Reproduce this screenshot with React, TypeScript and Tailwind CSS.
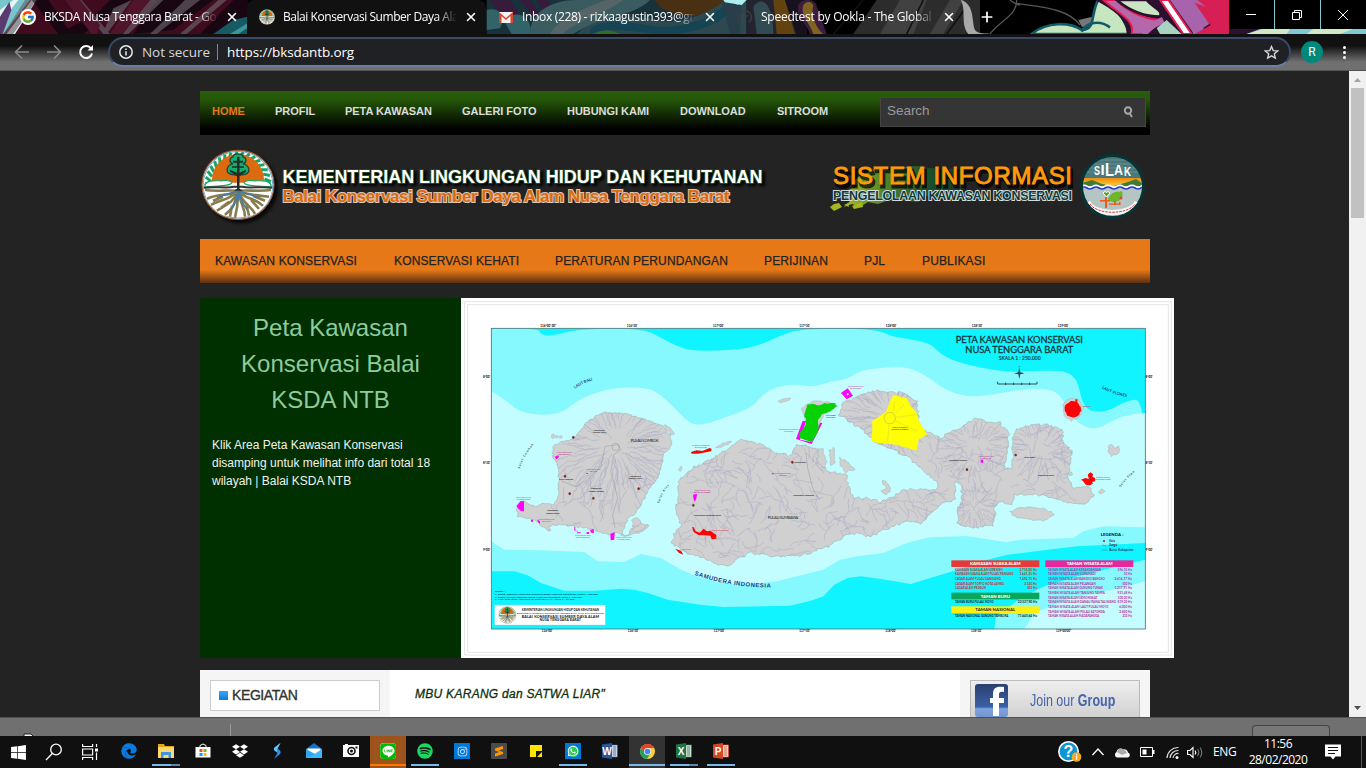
import React from "react";
import { FaDropbox, FaEdge, FaInstagram, FaLine, FaSpotify, FaWhatsapp, FaWindows } from "react-icons/fa";
import { FcGoogle } from "react-icons/fc";
import { X, Plus } from "lucide-react";

type Pt = [number, number];

/* ---------- helpers for coastlines and rivers ---------- */

function makeRandom(seed: number) {
  let s = seed;
  return () => {
    s = (s * 1664525 + 1013904223) % 4294967296;
    return s / 4294967296;
  };
}

function parse(src: string): Pt[] {
  return src.trim().split(/\s+/).map((p) => p.split(",").map(Number) as Pt);
}

function coast(src: string, seed: number, amp = 4): string {
  const pts = parse(src);
  const rnd = makeRandom(seed);
  let d = "";
  pts.forEach(([x, y], i) => {
    const [nx, ny] = pts[(i + 1) % pts.length];
    const n = Math.max(1, Math.round(Math.hypot(nx - x, ny - y) / 7));
    for (let k = 0; k < n; k++) {
      const t = k / n;
      const px = x + (nx - x) * t + (rnd() - 0.5) * amp * 2;
      const py = y + (ny - y) * t + (rnd() - 0.5) * amp * 2;
      d += `${d ? "L" : "M"}${px.toFixed(1)} ${py.toFixed(1)}`;
    }
  });
  return d + "Z";
}

function smooth(src: string): string {
  const p = parse(src);
  let d = `M${p[0][0]} ${p[0][1]}`;
  for (let i = 1; i < p.length - 1; i++) {
    const mx = (p[i][0] + p[i + 1][0]) / 2;
    const my = (p[i][1] + p[i + 1][1]) / 2;
    d += `Q${p[i][0]} ${p[i][1]} ${mx} ${my}`;
  }
  const l = p[p.length - 1];
  return d + `L${l[0]} ${l[1]}`;
}

function radial(cx: number, cy: number, r0: number, r1: number, n: number, seed: number): string {
  const rnd = makeRandom(seed);
  let d = "";
  for (let i = 0; i < n; i++) {
    let a = (i / n) * Math.PI * 2 + rnd() * 0.25;
    let r = r0 + rnd() * (r1 - r0) * 0.55;
    const end = r + (r1 - r) * (0.4 + rnd() * 0.6);
    d += `M${(cx + Math.cos(a) * r).toFixed(1)} ${(cy + Math.sin(a) * r).toFixed(1)}`;
    while (r < end) {
      r += 7;
      a += ((rnd() - 0.5) * 8) / r;
      d += `L${(cx + Math.cos(a) * r).toFixed(1)} ${(cy + Math.sin(a) * r).toFixed(1)}`;
    }
  }
  return d;
}

function streams(x0: number, y0: number, x1: number, y1: number, n: number, seed: number): string {
  const rnd = makeRandom(seed);
  let d = "";
  for (let i = 0; i < n; i++) {
    let x = x0 + rnd() * (x1 - x0);
    let y = y0 + rnd() * (y1 - y0);
    let a = rnd() * Math.PI * 2;
    d += `M${x.toFixed(1)} ${y.toFixed(1)}`;
    const len = 4 + Math.floor(rnd() * 7);
    for (let k = 0; k < len; k++) {
      a += (rnd() - 0.5) * 1.1;
      x += Math.cos(a) * 7;
      y += Math.sin(a) * 7;
      d += `L${x.toFixed(1)} ${y.toFixed(1)}`;
    }
  }
  return d;
}

/* ---------- map data ---------- */

const MID_TOP = smooth(
  "91,91 233,91 236,106 257,114 285,110 320,102 380,92 548,92 600,120 650,145 690,158 772,158 850,152 900,140 960,112 1020,92 1242,92 1290,115 1340,122 1407,136 1430,160 1460,180 1500,195 1570,212 1640,222 1700,220 1810,217 1845,240 1857,280 1863,310 1880,335 1910,343 1950,337 1990,310 2053,300 2053,735"
) +
  "L2053 735L1850 745L1760 755L1640 770L1560 790L1500 812L1400 842L1350 858L1260 843L1200 835L1160 840L1120 860L1087 895L1050 908L987 923L787 927L717 920L620 905L560 885L520 875L480 872L400 878L310 878L240 855L200 832L160 820L91 820Z";

const LIGHT =
  smooth(
    "91,280 140,310 175,342 250,353 310,342 350,305 430,275 480,269 560,270 600,290 640,330 690,381 737,378 800,355 870,330 900,295 940,268 1000,258 1060,268 1107,250 1157,245 1190,222 1240,210 1340,205 1407,240 1450,275 1520,298 1600,290 1700,270 1780,275 1810,310 1840,370 1900,398 1950,370 2000,350 2053,345"
  ) +
  "L2053 688L1927 685L1867 700L1837 720L1677 725L1637 733L1517 714L1407 718L1337 735L1267 765L1187 775L1137 785L1087 815L1007 835L947 850L860 860L787 855L720 840L660 815L600 780L540 768L490 792L410 790L370 762L240 757L130 755L91 730Z";

const LOMBOK = coast(
  "275,462 278,445 300,430 330,425 350,410 375,375 410,350 440,343 490,345 550,365 600,380 628,410 630,440 610,470 600,510 590,540 560,580 540,620 520,650 500,662 490,690 480,710 500,710 515,690 515,660 525,660 540,675 565,683 545,700 520,708 490,714 465,704 445,712 420,705 400,695 345,685 300,680 262,684 270,700 250,690 220,665 170,655 167,630 190,612 225,628 245,615 280,620 293,600 293,540 290,500 275,480",
  7, 3
);

const SUMBAWA = coast(
  "700,508 655,545 650,600 645,650 660,680 640,710 632,735 660,755 700,775 730,780 772,800 800,803 837,780 867,765 937,775 1017,772 1087,752 1157,713 1187,706 1227,717 1260,700 1287,690 1327,672 1377,675 1395,665 1407,650 1437,620 1462,612 1482,600 1482,550 1502,560 1502,610 1485,640 1492,680 1537,692 1597,682 1605,650 1600,628 1620,610 1650,620 1662,590 1707,588 1757,595 1807,610 1877,617 1897,590 1887,565 1837,570 1822,545 1827,500 1832,460 1807,435 1805,395 1757,380 1707,380 1667,395 1652,430 1657,480 1650,510 1630,512 1642,450 1642,400 1617,375 1567,368 1537,362 1507,385 1457,405 1442,422 1407,405 1377,390 1367,310 1327,285 1247,278 1187,295 1147,315 1132,350 1167,370 1207,400 1247,435 1307,460 1347,480 1387,520 1412,540 1434,560 1427,574 1327,575 1287,600 1257,612 1217,600 1177,600 1162,560 1157,530 1102,520 1072,490 1067,450 1007,440 987,475 937,460 877,430 842,425 797,455 747,485 720,500",
  19, 4
);

const ISLETS = [
  coast("1647,640 1677,627 1747,630 1782,650 1747,668 1690,663 1660,655", 3, 3),
  coast("1022,330 1057,308 1107,313 1130,325 1087,350 1072,400 1032,372", 4, 2),
  coast("1070,450 1085,452 1098,490 1085,510 1070,490", 5, 3),
  coast("1105,455 1118,450 1122,495 1108,500", 6, 3),
  coast("1137,480 1152,485 1180,515 1150,522 1140,505", 8, 3),
  coast("1265,550 1282,555 1290,580 1275,590 1262,580 1275,570", 9, 3),
  coast("952,310 968,302 990,300 985,307 960,314", 10, 1),
  coast("765,450 785,435 812,430 800,440 780,447", 12, 2),
  coast("611,380 628,390 641,408 632,410 615,395", 13, 1),
  coast("653,515 660,505 664,512 658,521", 14, 1),
  coast("1942,445 1952,438 1962,452 1974,445 1977,462 1950,474 1942,465", 15, 2),
  coast("1912,582 1922,572 1932,580 1920,589", 16, 1),
  coast("1823,525 1832,522 1834,531 1825,534", 17, 1),
  coast("1806,320 1825,302 1850,302 1868,330 1855,358 1830,369 1808,352", 18, 2),
];

const GRATICULE: [number, number, string][] = [
  [262, 88, "116°00' 00\""], [513, 88, "116°30'"], [772, 88, "117°00'"], [1031, 88, "117°30'"], [1290, 88, "118°00'"], [1548, 88, "118°30'"], [1806, 88, "119°00'"],
  [258, 1003, "116°00'"], [516, 1003, "116°30'"], [774, 1003, "117°00'"], [1031, 1003, "117°30'"], [1289, 1003, "118°00'"], [1546, 1003, "118°30'"], [1808, 1003, "119°00'00\""],
  [77, 239, "8°00'"], [77, 498, "8°30'"], [77, 758, "9°00'"],
  [2064, 239, "8°00'"], [2064, 498, "8°30'"], [2064, 758, "9°00'"],
];

const SMALL: [number, number, number, string, string][] = [
  [415, 399, 32, "Kabupaten", "#222"], [415, 406, 40, "Lombok Utara", "#222"],
  [523, 536, 32, "Kabupaten", "#222"], [523, 543, 40, "Lombok Timur", "#222"],
  [406, 574, 32, "Kabupaten", "#222"], [406, 581, 46, "Lombok Tengah", "#222"],
  [275, 640, 32, "Kabupaten", "#222"], [275, 647, 40, "Lombok Barat", "#222"],
  [315, 546, 42, "Kota Mataram", "#222"],
  [311, 466, 44, "TAMAN WISATA ALAM", "#c0268f"], [311, 472, 36, "KERANDANGAN", "#c0268f"],
  [397, 516, 44, "TAMAN WISATA ALAM", "#c0268f"], [397, 522, 24, "SURANADI", "#c0268f"],
  [188, 600, 44, "TAMAN WISATA ALAM", "#c0268f"], [188, 606, 40, "BANGKO BANGKO", "#c0268f"],
  [257, 666, 46, "TAMAN WISATA ALAM", "#c0268f"], [257, 672, 26, "PELANGAN", "#c0268f"],
  [366, 714, 46, "TAMAN WISATA ALAM", "#c0268f"], [366, 720, 40, "GUNUNG TUNAK", "#c0268f"],
  [488, 719, 46, "TAMAN WISATA ALAM", "#c0268f"], [488, 725, 38, "TANJUNG TAMPA", "#c0268f"],
  [720, 445, 52, "CAGAR ALAM PULAU", "#d22"], [720, 451, 36, "PANJANG", "#d22"],
  [724, 579, 46, "TAMAN WISATA ALAM", "#c0268f"], [724, 585, 50, "DANAU LEBO", "#c0268f"],
  [778, 698, 52, "CAGAR ALAM PEDAUH", "#d22"], [677, 757, 26, "CAGAR ALAM", "#d22"],
  [740, 653, 80, "Kabupaten Sumbawa Barat", "#222"], [1028, 594, 62, "Kabupaten Sumbawa", "#222"],
  [1018, 495, 36, "Sumbawa Besar", "#222"], [966, 528, 46, "TAMAN WISATA ALAM", "#c0268f"], [966, 534, 26, "SEMONGKAT", "#c0268f"],
  [983, 397, 58, "TAMAN WISATA ALAM LAUT", "#c0268f"], [983, 403, 26, "PULAU MOYO", "#c0268f"],
  [1184, 267, 46, "TAMAN WISATA ALAM", "#c0268f"], [1184, 273, 34, "PULAU SATONDA", "#c0268f"],
  [1109, 353, 30, "TAMAN BURU", "#222"], [1109, 359, 26, "PULAU MOYO", "#222"],
  [1317, 389, 46, "TAMAN NASIONAL", "#222"], [1317, 395, 52, "GUNUNG TAMBORA", "#222"],
  [1491, 490, 54, "Kabupaten Dompu", "#222"], [1706, 481, 32, "Kota Bima", "#222"], [1755, 534, 48, "Kabupaten Bima", "#222"],
  [1576, 477, 46, "TAMAN WISATA ALAM", "#c0268f"], [1576, 483, 30, "MADAPANGGA", "#c0268f"],
  [1877, 326, 24, "PULAU", "#d22"], [1926, 541, 40, "CAGAR ALAM", "#d22"], [1926, 547, 46, "TOFFO KOTA LAMBU", "#d22"],
];

const LEFT_ROWS: [number, string, string, string][] = [
  [818, "KAWASAN SUAKA ALAM JEREWEH", "3.718,80 Ha", "#cf2b2b"],
  [831, "KAWASAN SUAKA ALAM PULAU PANJANG", "1.641,25 Ha", "#cf2b2b"],
  [845, "CAGAR ALAM PULAU SANGIANG", "7.492,75 Ha", "#cf2b2b"],
  [861, "CAGAR ALAM TOFFO KOTA LAMBU", "3.340 Ha", "#cf2b2b"],
  [874, "CAGAR ALAM PEDAUH", "825 Ha", "#cf2b2b"],
  [916, "TAMAN BURU PULAU MOYO", "22.537,90 Ha", "#123"],
  [957, "TAMAN NASIONAL GUNUNG TAMBORA", "71.645,64 Ha", "#123"],
];

const RIGHT_ROWS: [string, string][] = [
  ["TAMAN WISATA ALAM KERANDANGAN", "396,10 Ha"], ["TAMAN WISATA ALAM SURANADI", "52 Ha"],
  ["TAMAN WISATA ALAM BANGKO BANGKO", "2.616,17 Ha"], ["TAMAN WISATA ALAM PELANGAN", "500 Ha"],
  ["TAMAN WISATA ALAM GUNUNG TUNAK", "1.217,91 Ha"], ["TAMAN WISATA ALAM TANJUNG TAMPA", "931,48 Ha"],
  ["TAMAN WISATA ALAM SEMONGKAT", "100,20 Ha"], ["TAMAN WISATA ALAM DANAU RAWA TALIWANG", "819,20 Ha"],
  ["TAMAN WISATA ALAM LAUT PULAU MOYO", "6.000 Ha"], ["TAMAN WISATA ALAM PULAU SATONDA", "2.600 Ha"],
  ["TAMAN WISATA ALAM MADAPANGGA", "232 Ha"],
];

const CITIES: Pt[] = [[337, 418], [312, 535], [326, 587], [533, 572], [397, 601], [697, 622], [994, 493], [1518, 515], [1664, 471]];

function RegionMap() {
  return (
    <svg viewBox="0 0 2139 1080" className="block h-[360px] w-[713px] shrink-0 bg-white font-['Lato',sans-serif]">
      <rect x="11" y="11" width="2120" height="1060" fill="none" stroke="#e4e4e4" strokeWidth="3" />
      <rect x="20" y="20" width="2102" height="1043" fill="none" stroke="#e4e4e4" strokeWidth="3" />
      <defs>
        <clipPath id="frame"><rect x="91" y="91" width="1962" height="902" /></clipPath>
        <clipPath id="land"><path d={LOMBOK} /><path d={SUMBAWA} /></clipPath>
        <path id="arcSea" d="M700 830Q815 872 950 868" />
        <path id="arcBali" d="M342 272Q370 252 397 247" />
        <path id="arcFlores" d="M1922 271Q1960 292 2004 298" />
        <path id="arcLombok" d="M176 512Q190 470 220 438" />
        <path id="arcAlas" d="M595 616Q600 590 626 560" />
        <path id="arcSape" d="M1979 568Q1996 540 2026 518" />
      </defs>
      <g clipPath="url(#frame)">
        <rect x="91" y="91" width="1962" height="902" fill="#10f4ff" />
        <path d={MID_TOP} fill="#86f9ff" />
        <path d="M1600 993L1605 955L1680 900L1750 865L1850 835L1950 810L2053 785V993Z" fill="#86f9ff" />
        <path d="M1690 993L1720 945L1830 900L1980 870L2053 850V993Z" fill="#c4fdff" />
        <path d={LIGHT} fill="#c4fdff" />
        <path d={LOMBOK} fill="#d0d0d0" stroke="#9aa" strokeWidth="1.5" />
        <path d={SUMBAWA} fill="#d0d0d0" stroke="#9aa" strokeWidth="1.5" />
        {ISLETS.map((d, i) => <path key={i} d={d} fill="#d0d0d0" stroke="#9aa" strokeWidth="1.2" />)}
        <g fill="#d0d0d0" stroke="#9aa" strokeWidth="1">
          <ellipse cx="276" cy="415" rx="5" ry="7" /><circle cx="287" cy="416" r="4" /><ellipse cx="299" cy="417" rx="5" ry="4" />
          <circle cx="603" cy="487" r="4" />
        </g>
        <g clipPath="url(#land)" fill="none" stroke="#a3a3c6" strokeWidth="1.5" opacity=".85">
          <path d={radial(465, 445, 24, 200, 90, 31)} />
          <path d={radial(1285, 360, 24, 150, 80, 32)} />
          <path d={radial(1540, 450, 20, 110, 44, 33)} />
          <path d={radial(1740, 450, 20, 110, 44, 34)} />
          <path d={radial(1538, 625, 14, 80, 34, 38)} />
          <path d={streams(280, 520, 600, 700, 46, 35)} />
          <path d={streams(650, 430, 1110, 790, 190, 36)} />
          <path d={streams(1100, 590, 1480, 710, 70, 37)} />
          <path d={streams(1420, 400, 1880, 620, 110, 39)} />
        </g>
        <g fill="none" stroke="#8b8b93" strokeWidth="1.2">
          <path d="M300 548L345 566L380 545L420 505L432 445L470 440L480 455L458 470L450 520L470 600L455 650L462 690" />
          <path d="M1035 465L1040 510L1055 570L1075 605" /><circle cx="464" cy="447" r="11" />
        </g>
        <path fill="#ffff05" d={coast("1297,292 1337,300 1352,330 1367,345 1372,365 1399,410 1372,425 1367,458 1307,440 1257,435 1232,430 1234,370 1277,340 1287,310", 41, 1)} />
        <circle cx="1286" cy="360" r="17" fill="none" stroke="#c2b84a" strokeWidth="2" />
        <path d="M1300 310L1296 343M1330 320L1300 348M1366 350L1303 358M1370 400L1302 368M1280 430L1284 378" stroke="#d6cf50" fill="none" strokeWidth="1.5" />
        <path fill="#f0f" d="M1025 368L1035 370L1017 425L1052 432L1077 375L1084 375L1052 438L1005 423Z" />
        <path fill="#06d206" d={coast("1039,320 1055,318 1075,322 1090,316 1122,315 1128,325 1107,340 1082,350 1072,365 1072,400 1052,433 1017,420 1015,405 1032,385 1036,362 1029,355", 42, 1)} />
        <g fill="#f0f">
          <path d="M1140 285L1160 271L1176 293L1157 304Z" /><circle cx="1160" cy="289" r="3" fill="#fff" />
          <path d="M166 625L178 610L189 608L189 640L178 638Z" /><path d="M281 476L292 472L294 478L286 484Z" />
          <path d="M448 708L461 702L460 725L449 727Z" /><path d="M387 696L398 693L399 705L390 704Z" />
          <path d="M340 686h3v14h5v6h11v-3h-10v-5h-9zM377 702h7v6h-7zM210 665h6v6h-6zM228 664l9 6v8l-5-4z" />
          <path d="M696 590L708 587L706 603L701 612L697 600Z" /><path d="M1559 485h7v9h-7z" /><path d="M932 526h8v3h-8zM376 525h5v3h-5z" />
        </g>
        <g fill="#fb0404">
          <path d="M690 462L707 457L724 459L746 450L752 453L750 460L728 464L710 467L692 467Z" />
          <path d="M693 687L698 688L704 700L716 704L728 692L738 700L748 698L766 711L766 722L752 724L748 713L730 712L712 711L698 702Z" />
          <path d="M643 752L660 758L667 770L654 765Z" />
          <path d={coast("1814,322 1828,311 1846,311 1860,325 1862,340 1850,354 1836,359 1818,352 1811,338", 43, 2)} /><path d="M1843 304h6v12h-6z" />
          <path d="M1860 545L1873 540L1884 543L1880 530L1888 523L1896 528L1894 536L1902 540V550L1893 552L1896 557L1886 562L1874 560L1866 549Z" />
        </g>
        {CITIES.map(([x, y], i) => <circle key={i} cx={x} cy={y} r="3.2" fill="#a01818" stroke="#400" strokeWidth="1" />)}
        <g fill="#1d3f86" fontWeight="700">
          <text fontSize="18" fontFamily="Liberation Sans"><textPath href="#arcSea" textLength="234">SAMUDERA INDONESIA</textPath></text>
          <text fontSize="12"><textPath href="#arcBali" textLength="58">LAUT BALI</textPath></text>
          <text fontSize="12"><textPath href="#arcFlores" textLength="80">LAUT FLORES</textPath></text>
          <g fill="#345" fontSize="9">
            <text><textPath href="#arcLombok" textLength="84">Selat Lombok</textPath></text>
            <text><textPath href="#arcAlas" textLength="62">Selat Alas</textPath></text>
            <text><textPath href="#arcSape" textLength="62">Selat Sape</textPath></text>
          </g>
        </g>
        <g textAnchor="middle" fill="#222">
          <text x="551" y="431" fontSize="12" textLength="84">PULAU LOMBOK</text>
          <text x="966" y="663" fontSize="12" textLength="92">PULAU SUMBAWA</text>
        </g>
        <g textAnchor="middle" fontSize="6.5" fontWeight="700">
          {SMALL.map(([x, y, w, t, c], i) => <text key={i} x={x} y={y} fill={c} textLength={w} lengthAdjust="spacingAndGlyphs">{t}</text>)}
        </g>
        <g fill="#10323a" textAnchor="middle">
          <text x="1675" y="136" fontSize="28" textLength="381" stroke="#10323a" strokeWidth=".8">PETA KAWASAN KONSERVASI</text>
          <text x="1675" y="166" fontSize="28" textLength="324" stroke="#10323a" strokeWidth=".8">NUSA TENGGARA BARAT</text>
          <text x="1676" y="186" fontSize="15" textLength="126" stroke="#10323a" strokeWidth=".4">SKALA 1 : 250.000</text>
          <text x="1675" y="206" fontSize="7">U</text>
        </g>
        <path d="M1675 208L1678 223L1691 226L1678 229L1675 244L1672 229L1659 226L1672 223Z" fill="#284a50" />
        <path d="M1610 251V258H1728V251M1634 254V261M1658 254V261M1682 254V261M1706 254V261" fill="none" stroke="#233" strokeWidth="2.5" />
        <g fill="#123">
          <text x="1919" y="713" fontSize="13" fontWeight="900" textLength="68">LEGENDA :</text>
          <circle cx="1929" cy="729" r="3" fill="#a11" />
          <path d="M1924 740l6 3 5-1M1921 756h18" stroke="#345" fill="none" />
          <text x="1945" y="732" fontSize="8" fontWeight="700">Kota</text>
          <text x="1945" y="745" fontSize="8" fontWeight="700">Sungai</text>
          <text x="1945" y="759" fontSize="8" fontWeight="700" textLength="72">Batas Kabupaten</text>
        </g>
        <g fontSize="13" fontWeight="900" fill="#fff" textAnchor="middle">
          <rect x="1471" y="787" width="264" height="20" fill="#e8393a" /><text x="1603" y="802" textLength="152">KAWASAN SUAKA ALAM</text>
          <rect x="1471" y="884" width="264" height="20" fill="#0ba55a" /><text x="1603" y="899" textLength="88">TAMAN BURU</text>
          <rect x="1471" y="925" width="264" height="20" fill="#fdf010" /><text x="1603" y="940" textLength="120" fill="#333">TAMAN NASIONAL</text>
          <rect x="1753" y="787" width="264" height="20" fill="#e6299a" /><text x="1886" y="802" textLength="138">TAMAN WISATA ALAM</text>
        </g>
        <g fontSize="8" fontWeight="700">
          {LEFT_ROWS.map(([y, a, b, c]) => (
            <g key={a} fill={c}><text x="1482" y={y} textLength={a.length * 5.5} lengthAdjust="spacingAndGlyphs">{a}</text><text x="1728" y={y} textAnchor="end" textLength={b.length * 4.8} lengthAdjust="spacingAndGlyphs">{b}</text></g>
          ))}
          {RIGHT_ROWS.map(([a, b], i) => (
            <g key={a} fill="#b8329c"><text x="1761" y={818 + i * 14} textLength={a.length * 5.5} lengthAdjust="spacingAndGlyphs">{a}</text><text x="2013" y={818 + i * 14} textAnchor="end" textLength={b.length * 4.8} lengthAdjust="spacingAndGlyphs">{b}</text></g>
          ))}
        </g>
        <g fill="#073b4a" fontSize="7.5" fontWeight="700">
          <text x="102" y="883">Sumber :</text>
          <text x="102" y="891" textLength="308">1. Digital Kawasan Konservasi Indonesia Badan Planologi Kehutanan, Skala 1 : 250.000</text>
          <text x="102" y="899" textLength="260">2. Digital Wilayah Indonesia Badan Planologi Kehutanan, Skala 1 : 250.000</text>
          <text x="102" y="907" textLength="238">3. Peta Rupa Bumi Indonesia BAKOSURTANAL, Skala 1 : 25.000</text>
        </g>
        <rect x="101" y="921" width="332" height="60" fill="#fff" stroke="#9cc" />
        <svg x="112" y="924" width="54" height="54" viewBox="0 0 74 74"><SealArt /></svg>
        <g fill="#222" fontWeight="700" textAnchor="middle">
          <text x="298" y="940" fontSize="9" textLength="232">KEMENTERIAN LINGKUNGAN HIDUP DAN KEHUTANAN</text>
          <text x="298" y="948" fontSize="6.5" textLength="262">DIREKTORAT JENDERAL KONSERVASI SUMBER DAYA ALAM DAN EKOSISTEM</text>
          <text x="298" y="959" fontSize="11" fontWeight="900" textLength="232">BALAI KONSERVASI SUMBER DAYA ALAM</text>
          <text x="298" y="970" fontSize="9.5" fontWeight="900" textLength="124">NUSA TENGGARA BARAT</text>
        </g>
      </g>
      <rect x="91" y="91" width="1962" height="902" fill="none" stroke="#4a7478" strokeWidth="2.5" />
      <g fontSize="9" fontWeight="900" fill="#222" textAnchor="middle">
        {GRATICULE.map(([x, y, t], i) => <text key={i} x={x} y={y}>{t}</text>)}
      </g>
    </svg>
  );
}

/* ---------- logos ---------- */

function SealArt() {
  const leaves = Array.from({ length: 18 }, (_, i) => Math.PI - 0.1 + (i / 17) * (Math.PI + 0.1));
  return (
    <g>
      <ellipse cx="37" cy="37" rx="36" ry="34.5" fill="#fff" stroke="#9a5a35" strokeWidth="1.2" />
      <ellipse cx="37" cy="37" rx="34.800" ry="33.300" fill="none" stroke="#4d8fb8" strokeWidth=".8" />
      {leaves.map((a, i) => (
        <path key={i} d={`M${37 + Math.cos(a) * 27} ${36 + Math.sin(a) * 26}L${37 + Math.cos(a + 0.12) * 33} ${36 + Math.sin(a + 0.12) * 32}`} stroke="#12a566" strokeWidth="3" />
      ))}
      <path d="M11 35C10 19 22 6.500 37 6.500S64 19 63 35L50 35H24Z" fill="#dc6a0e" />
      <path d="M4 37C6 32 14 33 20 33C28 32 33 34 30 36C26 39 12 38 4 39ZM70 37C68 32 60 33 54 33C46 32 41 34 44 36C48 39 62 38 70 39Z" fill="#fff" stroke="#12a566" strokeWidth="1.200" />
      <path d="M3 41C12 39 22 41 31 41L43 41C52 40 62 39 71 41C70 48 68 53 64 58L58 64C50 71 24 71 16 64L10 58C6 53 4 48 3 41Z" fill="#fff" />
      <path d="M36 43C26 42 14 44 4 42M36 44C28 48 16 46 6 51M36 44C28 52 20 52 10 57M36 45C32 56 22 58 16 63M36 46C34 58 30 62 24 67M37 46C37 56 36 62 34 70M38 46C40 58 44 60 44 69M38 45C42 56 50 58 54 66M38 44C46 52 54 50 62 58M38 44C46 46 56 48 68 49M38 43C48 42 60 44 70 42M28 54L20 60M31 58L29 69M45 55L48 68M50 52L58 61M22 49L12 53M52 48L64 53" fill="none" stroke="#867c4d" strokeWidth="2.600" />
      <path d="M3 40C14 38 24 41 33 39L41 39C50 41 60 38 71 40" fill="none" stroke="#333" strokeWidth="2" />
      <path d="M36 43C30 46 24 46 16 50M37 43C36 50 34 56 30 62M38 43C44 46 50 46 57 50M38 43C39 50 42 56 46 62M37 42V54" fill="none" stroke="#3c7db0" strokeWidth="1.500" />
      <path d="M32 9C31 5 43 5 42 9C46 10 46 15 42 16C49 17 51 27 41 27H33C23 27 25 17 32 16C28 15 28 10 32 9Z" fill="#12b070" stroke="#234236" strokeWidth="1.300" />
      <path d="M36 9H38.500V41L42 43H33L36 41ZM29 22L36 25V28.500L29 24ZM45 22L38.500 25V28.500L45 24ZM32 13H42V15H32ZM31 18.500H43V20H31Z" fill="#252b25" />
    </g>
  );
}

function MinistryLogo() {
  return (
    <svg viewBox="0 0 575 80" className="h-[80px] w-[575px] shrink-0 font-['Liberation_Sans',Arial,sans-serif] font-bold">
      <defs><filter id="soft"><feGaussianBlur stdDeviation="1.6" /></filter></defs>
      <ellipse cx="41" cy="39" rx="37" ry="35.500" fill="#000" opacity=".75" filter="url(#soft)" />
      <g transform="translate(1 -1.200)"><SealArt /></g>
      <text x="85" y="36" fontSize="18" textLength="480" fill="#000" filter="url(#soft)" stroke="#000" strokeWidth="2">KEMENTERIAN LINGKUNGAN HIDUP DAN KEHUTANAN</text>
      <text x="82.500" y="33.500" fontSize="18" textLength="480" fill="#fff" stroke="#1d4a22" strokeWidth="1.800" paintOrder="stroke">KEMENTERIAN LINGKUNGAN HIDUP DAN KEHUTANAN</text>
      <text x="82.500" y="53" fontSize="17" textLength="447" fill="#dc6a0e" stroke="#dcc6b4" strokeWidth="2" paintOrder="stroke">Balai Konservasi Sumber Daya Alam Nusa Tenggara Barat</text>
    </svg>
  );
}

function SilakLogo() {
  return (
    <svg viewBox="0 0 320 80" className="h-[80px] w-[320px] shrink-0 font-['Liberation_Sans',Arial,sans-serif]">
      <defs>
        <linearGradient id="brush" x1="0" x2="1"><stop offset="0" stopColor="#a8bd18" /><stop offset=".35" stopColor="#4c7f2e" /><stop offset=".7" stopColor="#154b2c" /><stop offset="1" stopColor="#20342a" /></linearGradient>
        <linearGradient id="sun" x1="0" x2="0" y1="0" y2="1"><stop offset="0" stopColor="#f08b10" /><stop offset="1" stopColor="#f9d33c" /></linearGradient>
        <clipPath id="disc"><circle cx="282.500" cy="36.500" r="29.500" /></clipPath>
      </defs>
      <path d="M28 27L46 18L60 20L72 17L88 16L98 18L118 19L138 18L143 21L132 25L141 29L130 33L136 38L124 42L116 48L96 46L88 52L62 49L48 54L38 52L30 57L22 54L14 57L20 51L12 50L18 47L24 43L18 40L28 36L22 33Z" fill="url(#brush)" />
      <path d="M0 57L4 54L9 53L12 57L4 61ZM22 56L32 52L33 57L24 59ZM14 55L18 53L19 57Z" fill="#a5b520" />
      <g fontWeight="400">
        <text x="5" y="36.500" fontSize="24" textLength="239" fill="#000" stroke="#000" strokeWidth="3" opacity=".7">SISTEM INFORMASI</text>
        <text x="3" y="34" fontSize="24" textLength="239" fill="#ff9a08" stroke="#ff9a08" strokeWidth=".9">SISTEM INFORMASI</text>
      </g>
      <text x="3" y="49.500" fontSize="12.500" fontWeight="700" textLength="239" fill="#12393b" stroke="#d3dedb" strokeWidth="1.800" paintOrder="stroke">PENGELOLAAN KAWASAN KONSERVASI</text>
      <circle cx="282.500" cy="36.500" r="32.500" fill="#063436" />
      <g clipPath="url(#disc)">
        <rect x="250" y="5" width="65" height="25" fill="#49777a" />
        <path d="M253 14H313M253 18H313M253 22H313M255 10H311" stroke="#769a9a" strokeWidth=".7" />
        <rect x="250" y="28" width="65" height="9" fill="url(#sun)" />
        <path d="M252 33L262 30L272 34L282 36H252ZM284 36L298 32L306 29L313 34V37H284Z" fill="#3f7d34" />
        <rect x="250" y="36" width="65" height="32" fill="#b5c5c3" />
        <path d="M251 37Q254 35 257 37T263 37T269 37T275 37T281 37T287 37T293 37T299 37T305 37T311 37T317 37" fill="none" stroke="#fff" strokeWidth="3" />
        <path d="M251 38Q254 36 257 38T263 38T269 38T275 38T281 38T287 38T293 38T299 38T305 38T311 38T317 38" fill="none" stroke="#2436c4" strokeWidth="1.600" />
        <path d="M258 52C264 66 301 66 307 52" fill="none" stroke="#f5f5f5" strokeWidth="5" />
        <path d="M260 54C267 65 298 65 305 54" fill="none" stroke="#d53a2d" strokeWidth="1" strokeDasharray="2.500 1" />
        <path d="M278 49C282 39 290 43 292 41C295 50 286 54 280 51Z" fill="#6db52a" />
        <path d="M273 43l2-1.500 1.500 1 1.500-1 2 1.500-3.500 4z" fill="#53a528" stroke="#fff" />
        <path d="M275 47h2v11H275zM270 50h10v1.500H270zM284 51h2v4h-2zM289 52h1.500v3h-1.500zM279 53.500h11v1.200H279z" fill="#ee5a18" />
        <circle cx="291" cy="48" r="1.500" fill="#e44" />
      </g>
      <g fill="#fff" fontWeight="700" fontFamily="Liberation Sans">
        <text x="264" y="25" fontSize="12" textLength="6" lengthAdjust="spacingAndGlyphs">S</text>
        <text x="270.500" y="25" fontSize="15" textLength="4">I</text>
        <text x="275" y="26" fontSize="18" textLength="9" lengthAdjust="spacingAndGlyphs">L</text>
        <text x="284" y="25" fontSize="14" textLength="9" lengthAdjust="spacingAndGlyphs">A</text>
        <text x="294" y="26" fontSize="12" textLength="7" lengthAdjust="spacingAndGlyphs">K</text>
      </g>
    </svg>
  );
}

/* ---------- browser chrome ---------- */

function ThemeArt() {
  return (
    <svg viewBox="0 0 4098 102" preserveAspectRatio="none" className="absolute inset-0 h-[34px] w-[1366px]">
      <rect width="4098" height="102" fill="#000" />
      <path d="M0 0H742V102H0Z" fill="#400c1d" />
      <path d="M0 0H90L10 102H0Z" fill="#78c6cc" /><path d="M0 30L40 0H55L0 70ZM20 102L95 0H110L45 102Z" fill="#e9f3f2" /><path d="M0 50L28 5L34 30L8 102H0Z" fill="#5b3a72" />
      <path d="M95 0H145L215 102H175ZM330 0H395L250 102H175L290 40ZM475 0H640L520 90L400 102L440 40ZM700 0H742V60L640 102H600Z" fill="#180712" />
      <path d="M75 0H110L40 102H10ZM225 0L245 0L330 102H310ZM340 25L395 0L320 102H308ZM450 0H490L385 102H368ZM555 0H600L470 102H450ZM655 0L680 0L560 102H540Z" fill="#67636b" opacity=".65" />
      <path d="M195 0H240L300 75L290 102H275ZM400 0H450L365 102H330Z" fill="#50142b" />
      <path d="M640 102L700 60L742 50V102Z" fill="#165a63" /><path d="M690 102L742 70V84L715 102Z" fill="#3c9699" />
      <path d="M1460 0H2225V102H1460Z" fill="#19313a" />
      <path d="M1470 0H1530L1600 102H1545ZM1560 0H1590L1650 80L1640 102ZM1610 0H1640L1690 60L1660 90Z" fill="#371b3b" />
      <path d="M1460 30C1500 20 1520 50 1500 85L1460 90ZM1510 60C1560 20 1600 60 1590 102H1535Z" fill="#316368" />
      <path d="M1590 102C1590 40 1650 0 1730 0H1950C1900 50 1790 55 1720 102Z" fill="#3a5b5f" />
      <path d="M1650 102C1670 60 1750 25 1820 0H1870C1800 50 1720 65 1690 102Z" fill="#61696b" opacity=".7" />
      <path d="M1965 0H2180C2140 55 2030 60 1980 20Z" fill="#4a3013" />
      <path d="M1730 102C1800 40 1900 45 1970 60C2040 80 2130 35 2180 0H2240V102Z" fill="#2d484e" />
      <path d="M1770 85C1850 40 1930 85 2000 80C2100 75 2160 35 2190 0L2215 0C2190 60 2100 102 2000 102C1920 102 1850 75 1770 102Z" fill="#154454" />
      <path d="M1780 102Q1820 80 1860 102Z" fill="#356a2f" />
      <path d="M2170 0H2240L2220 20L2200 45Z" fill="#aeeef1" /><path d="M2165 5L2225 15L2218 102H2190Z" fill="#283e4b" /><path d="M2185 0H2232L2212 14Z" fill="#aeeef1" />
      <path d="M2240 0H2420V102H2240Z" fill="#23242f" /><path d="M2260 20C2290 -20 2320 20 2320 102H2270Z" fill="#324a51" /><path d="M2320 0H2355L2385 102H2330Z" fill="#62420e" />
      <path d="M2355 0H2420V102H2390Z" fill="#17101d" /><path d="M2395 15C2405 -5 2445 -5 2450 18L2480 102H2430C2420 70 2385 50 2395 15Z" fill="#3c1c3f" /><path d="M2410 15C2420 0 2440 5 2440 20C2430 45 2450 85 2470 102H2440C2430 70 2400 45 2410 15Z" fill="#806321" />
      <path d="M2560 102L2630 0H2940V102Z" fill="#2c2c2c" /><path d="M2700 0H2780L2740 102H2640ZM2850 0H2890L2830 102H2790Z" fill="#414141" />
      <path d="M2500 102L2590 0M2720 102L2770 0M2840 102L2900 20" stroke="#111" strokeWidth="5" fill="none" />
      <path d="M2882 0C2925 10 2915 70 2925 90C2935 105 2960 98 2972 102H2905C2880 70 2900 30 2882 0Z" fill="#a9a9a9" />
      <path d="M2970 102C3000 60 3050 50 3050 0M3050 10C3100 20 3200 20 3240 75M3060 15C3040 10 3030 0 3030 0" stroke="#555" strokeWidth="4" fill="none" />
      <path d="M3235 60L3300 45V80H3245Z" fill="#777" />
      <path d="M3095 102C3140 65 3210 65 3245 90C3290 90 3270 40 3295 0H3350C3350 50 3390 75 3385 102Z" fill="#c6e6c0" stroke="#125a67" strokeWidth="8" />
      <path d="M3245 95C3260 65 3300 60 3330 82" stroke="#125a67" strokeWidth="8" fill="none" />
      <path d="M3285 0H3570L3700 102H3380C3380 55 3340 30 3285 0Z" fill="#2c1030" />
      <path d="M3310 0C3360 45 3405 60 3395 102H3440L3480 60C3420 55 3370 25 3350 0Z" fill="#b467aa" stroke="#e31d52" strokeWidth="6" />
      <path d="M3350 0H3440C3460 25 3490 30 3480 50C3420 50 3380 25 3350 0Z" fill="#cae7c3" stroke="#2c1030" strokeWidth="8" />
      <path d="M3430 102C3450 75 3470 70 3490 60" stroke="#b467aa" strokeWidth="20" fill="none" /><path d="M3470 85L3500 60L3545 102H3480Z" fill="#a9d2c1" />
      <path d="M3545 0H3610V102H3580Z" fill="#a863ad" /><path d="M3480 0H3505L3575 102H3550Z" fill="#fff" stroke="#e31d52" strokeWidth="6" />
      <path d="M3510 0H3610V102H3582Z" fill="#a863ad" /><path d="M3560 0H3687V102H3585L3632 75Z" fill="#d81f55" /><path d="M3520 0L3600 90L3628 72L3578 0Z" fill="#a863ad" /><path d="M3560 0L3618 20L3592 0Z" fill="#a863ad" />
      <path d="M3687 0H4098V102H3687Z" fill="#7fcad0" /><path d="M3687 87H3780L3740 102H3687Z" fill="#2c1030" /><path d="M3740 102L3790 87H3870L3860 102ZM3940 87H4060L4020 102H3920Z" fill="#cfe8c6" />
    </svg>
  );
}

const TABS = [
  { title: "BKSDA Nusa Tenggara Barat - Goo", kind: "google", bg: "bg-transparent", track: "tracking-[-0.4px]" },
  { title: "Balai Konservasi Sumber Daya Alam", kind: "seal", bg: "bg-[#111111]", track: "tracking-[-0.45px]" },
  { title: "Inbox (228) - rizkaagustin393@gmail", kind: "mail", bg: "bg-transparent", track: "tracking-[-0.33px]" },
  { title: "Speedtest by Ookla - The Global B", kind: "speed", bg: "bg-transparent", track: "tracking-[-0.24px]" },
];

function TabIcon({ kind }: { kind: string }) {
  if (kind === "google") return <span className="flex size-4 items-center justify-center rounded-full bg-white"><FcGoogle size={14} /></span>;
  if (kind === "seal") return <svg viewBox="0 0 74 74" className="size-4"><SealArt /></svg>;
  if (kind === "mail")
    return (
      <svg viewBox="0 0 16 16" className="size-4"><path d="M1 3h14v11H1z" fill="#f2f2f2" /><path d="M1 14V3l7 6 7-6v11h-2.500V7L8 11 3.500 7v7z" fill="#d94434" /></svg>
    );
  return (
    <svg viewBox="0 0 16 16" className="size-4" fill="none" stroke="#3c3c44" strokeWidth="1.500"><path d="M4 13.500A6.500 6.500 0 1 1 12 13.500M8 9l3-3" /></svg>
  );
}

function TabStrip() {
  return (
    <div className="relative h-[34px] shrink-0 overflow-hidden text-white">
      <ThemeArt />
      <div className="relative flex h-full">
        <div className="flex pl-2">
          {TABS.map((t) => (
            <div key={t.kind} className={`flex w-[239px] items-center rounded-t-lg pr-2 pl-3 ${t.bg}`}>
              <TabIcon kind={t.kind} />
              <span className={`ml-2 w-[174px] overflow-hidden text-[12px] leading-4 whitespace-nowrap [mask-image:linear-gradient(to_right,black_88%,transparent)] ${t.track}`}>{t.title}</span>
              <X className="ml-[7px] size-[14px] shrink-0" strokeWidth={2.6} />
            </div>
          ))}
        </div>
        <Plus className="mt-[9px] ml-[15px] size-4" strokeWidth={2.6} />
        <div className="ml-auto flex h-[29px] gap-px">
          <div className="flex w-[45px] items-center justify-center bg-black"><span className="mr-[2px] h-px w-[10px] bg-white" /></div>
          <div className="flex w-[45px] items-center justify-center bg-black">
            <svg viewBox="0 0 10 10" className="mr-px size-[10px]" fill="none" stroke="#fff"><path d="M.5 2.500h7v7h-7zM2.500 2.500v-2h7v7h-2" /></svg>
          </div>
          <div className="flex w-[45px] items-center justify-center bg-black">
            <svg viewBox="0 0 10 10" className="mr-px size-[10px]" stroke="#fff"><path d="M0 0L10 10M10 0L0 10" /></svg>
          </div>
        </div>
      </div>
    </div>
  );
}

function Toolbar() {
  return (
    <div className="flex h-[37px] shrink-0 items-start border-b border-[#555] bg-[linear-gradient(to_bottom,#111_0,#111_12px,#707070_28px)] pt-[3px] text-white">
      <svg viewBox="0 0 108 30" className="h-[30px] w-[108px] shrink-0" fill="none" stroke="#8a8a8a" strokeWidth="1.600">
        <path d="M29 15H16M22 8.500L15.500 15L22 21.500M47 15H60M54 8.500L60.500 15L54 21.500" />
        <path d="M91 11.500A6 6 0 1 0 92 16.500" stroke="#fff" strokeWidth="2" /><path d="M93 8V13.500H87.500Z" fill="#fff" stroke="none" />
      </svg>
      <div className="flex h-[30px] w-[1183px] shrink-0 items-center rounded-full border-2 border-[#3c4a66] border-b-[#6b7fa5] bg-[#202124] pr-[10px] pl-[9px] text-[14px]">
        <svg viewBox="0 0 14 14" className="size-[14px] shrink-0" fill="none" stroke="#e8eaed" strokeWidth="1.500"><circle cx="7" cy="7" r="6.200" /><path d="M7 6.200V10.500M7 3.500V5" /></svg>
        <span className="ml-[9px] w-[68px] text-[13.5px] tracking-[-0.05px] whitespace-nowrap text-[#d5d7da]">Not secure</span>
        <span className="ml-[7px] h-4 w-px bg-[#80868b]" />
        <span className="ml-[9px] text-[13.5px] tracking-[-0.12px]">https://bksdantb.org</span>
        <svg viewBox="0 0 24 24" className="ml-auto size-[15px]" fill="none" stroke="#d5d7da" strokeWidth="2.200"><path d="M12 2.500l2.800 6.400 7 .6-5.300 4.600 1.600 6.900L12 17.400 5.900 21l1.600-6.900L2.200 9.500l7-.6z" /></svg>
      </div>
      <span className="mt-[4px] ml-[10px] flex size-[22px] items-center justify-center rounded-full bg-[#00897b] font-['Roboto',sans-serif] text-[12px]">R</span>
      <div className="mt-[9px] ml-[20px] flex flex-col gap-[2px]">
        <span className="size-[3px] rounded-full bg-white" /><span className="size-[3px] rounded-full bg-white" /><span className="size-[3px] rounded-full bg-white" />
      </div>
    </div>
  );
}

/* ---------- page ---------- */

const TOP_NAV = [
  ["HOME", "w-[63px]"], ["PROFIL", "w-[70px]"], ["PETA KAWASAN", "w-[117px]"], ["GALERI FOTO", "w-[105px]"], ["HUBUNGI KAMI", "w-[113px]"], ["DOWNLOAD", "w-[97px]"], ["SITROOM", "w-[80px]"],
];
const MAIN_NAV = [
  ["KAWASAN KONSERVASI", "w-[179px]"], ["KONSERVASI KEHATI", "w-[161px]"], ["PERATURAN PERUNDANGAN", "w-[209px]"], ["PERIJINAN", "w-[100px]"], ["PJL", "w-[58px]"], ["PUBLIKASI", "w-[80px]"],
];

function Page() {
  return (
    <div className="h-full w-[1149px] flex-1 overflow-hidden bg-[#232323] pl-[200px] font-['Liberation_Sans',Arial,sans-serif]">
      <nav className="mt-[20px] flex h-[44px] w-[950px] bg-[linear-gradient(to_bottom,#285f0a_0,#255808_8px,#000_38px)] pl-3 text-[11px] leading-[40px] font-bold tracking-[-0.04px] whitespace-nowrap text-[#ddd]">
        {TOP_NAV.map(([t, w], i) => <a key={t} className={`${w} ${i === 0 ? "text-[#e67817]" : ""}`}>{t}</a>)}
        <div className="mt-[6px] ml-[23px] flex h-[30px] w-[266px] items-center border border-[#454545] bg-[#353535] pr-[10px] pl-[6px] text-[13.5px] leading-[26px] font-normal text-[#9a9a9a]">
          <span className="-mt-[3px]">Search</span>
          <svg viewBox="0 0 12 14" className="ml-auto h-[14px] w-[12px]" fill="none" stroke="#aaa" strokeWidth="1.900"><circle cx="5" cy="5.500" r="3.200" /><path d="M6.800 8.500L9 12" /></svg>
        </div>
      </nav>
      <header className="mt-[14px] flex h-[90px] w-[950px]">
        <MinistryLogo />
        <div className="ml-[55px] pt-px"><SilakLogo /></div>
      </header>
      <nav className="flex h-[44px] w-[950px] bg-[linear-gradient(to_bottom,#e67817_0,#e67817_31px,#5c3010_44px)] pl-[15px] text-[12px] leading-[44px] tracking-[0.15px] whitespace-nowrap text-[#222] [-webkit-text-stroke:0.25px_#222]">
        {MAIN_NAV.map(([t, w]) => <a key={t} className={w}>{t}</a>)}
      </nav>
      <section className="mt-[15px] flex h-[360px] w-[974px]">
        <div className="w-[261px] bg-[#003000] pt-[12px]">
          <h1 className="px-[30px] text-center text-[24px] leading-[36px] text-[#8ecb9f]">Peta Kawasan Konservasi Balai KSDA NTB</h1>
          <p className="mt-[18px] pl-3 text-[12px] leading-[18px] text-[#f2f2f2]">Klik Area Peta Kawasan Konservasi<br />disamping untuk melihat info dari total 18<br />wilayah | Balai KSDA NTB</p>
        </div>
        <RegionMap />
      </section>
      <section className="mt-3 flex h-[60px] w-[950px]">
        <div className="w-[190px] bg-[#f5f5f5] p-[10px]">
          <div className="flex h-[31px] items-center border border-[#ccc] bg-white pl-[8px] text-[14px] text-[#333] [-webkit-text-stroke:0.35px_#333]">
            <span className="mr-[4px] size-[9px] bg-linear-to-b from-[#35a8f5] to-[#1478d8]" /><span className="tracking-[-0.4px]">KEGIATAN</span>
          </div>
        </div>
        <div className="w-[570px] bg-white pt-[15px] pl-[25px] text-[12px] leading-[18px] text-[#0d300d] italic [-webkit-text-stroke:0.3px_#0d300d]">
          <span className="tracking-[0.28px] whitespace-nowrap">MBU KARANG dan SATWA LIAR"</span>
        </div>
        <div className="w-[190px] bg-[#f5f5f5] p-[10px]">
          <div className="flex h-[45px] items-start border border-[#bbb] bg-linear-to-b from-[#eee] to-[#ccc] pt-[3px] pl-1">
            <svg viewBox="0 0 33 33" className="size-[33px] shrink-0">
              <defs><linearGradient id="fb" x1="0" x2="0" y1="0" y2="1"><stop offset="0" stopColor="#293e6d" /><stop offset=".7" stopColor="#3d62a8" /><stop offset=".75" stopColor="#7fa3dd" /><stop offset="1" stopColor="#7295d2" /></linearGradient></defs>
              <rect width="33" height="33" rx="3" fill="url(#fb)" />
              <path d="M18 32V19H15V14H18V10C18 4 21 2 29 3V8C25 7.500 24 8 24 11V14H29V19H24V32Z" fill="#fff" />
            </svg>
            <span className="mt-[6px] ml-[22px] origin-left scale-x-[0.78] text-[16px] leading-[22px] whitespace-nowrap text-[#4565ab]">Join our <b>Group</b></span>
          </div>
        </div>
      </section>
    </div>
  );
}

function Scrollbar() {
  return (
    <div className="flex h-full w-[17px] shrink-0 flex-col items-center bg-[#f1f1f1]">
      <svg viewBox="0 0 17 17" className="size-[17px]"><path d="M5 11h7L8.500 7z" fill="#a3a3a3" /></svg>
      <div className="h-[130px] w-[13px] bg-[#c1c1c1]" />
      <svg viewBox="0 0 17 17" className="mt-auto size-[17px]"><path d="M5 6h7L8.500 10z" fill="#505050" /></svg>
    </div>
  );
}

function DownloadBar() {
  return (
    <div className="flex h-[19px] shrink-0 border-t border-[#505050] bg-[#707070]">
      <svg viewBox="0 0 12 4" className="mt-[15px] ml-[23px] h-[4px] w-[12px]"><path d="M1 4V1h7l3 3z" fill="#fff" stroke="#222" /></svg>
      <span className="mt-[6px] ml-[195px] w-px bg-[#999]" />
      <span className="mt-[7px] ml-auto mr-[36px] w-[78px] rounded-t-[4px] border border-b-0 border-[#444] bg-[#777]" />
    </div>
  );
}

/* ---------- taskbar ---------- */

function OfficeIcon({ letter, color }: { letter: string; color: string }) {
  return (
    <svg viewBox="0 0 16 16" className="size-4" fontFamily="Liberation Sans">
      <path d="M9 2h6.500v12H9z" fill="#fff" stroke={color} strokeWidth=".8" />
      <path d="M10.500 4h4M10.500 6h4M10.500 8h4M10.500 10h4M10.500 12h4" stroke={color} />
      <path d="M0 1.500L10 0V16L0 14.500Z" fill={color} />
      <text x="5" y="11.500" fontSize="10" fontWeight="700" fill="#fff" textAnchor="middle">{letter}</text>
    </svg>
  );
}

const APPS: { id: string; cell: string; line?: string; icon: React.ReactNode }[] = [
  { id: "edge", cell: "", icon: <FaEdge size={16} color="#0a7bdc" /> },
  { id: "explorer", cell: "", line: "w-[28px] bg-[linear-gradient(to_right,#76b9ed_19px,#5a8ab0_19px)]", icon: <svg viewBox="0 0 16 16" className="size-4"><path d="M0 1h6l1 2h9v12H0z" fill="#e8a317" /><path d="M0 4h16v11H0z" fill="#fbd871" /><path d="M3 15V9h10v6h-2.500v-3h-5v3z" fill="#3f96dd" /></svg> },
  { id: "store", cell: "", icon: <svg viewBox="0 0 16 16" className="size-4"><path d="M5 4V2.500Q8-.5 11 2.500V4" fill="none" stroke="#fff" /><path d="M.5 4h15v10.500H.5z" fill="#fff" /><path d="M4.500 6h3v3h-3z" fill="#f25022" /><path d="M8.500 6h3v3h-3z" fill="#7fba00" /><path d="M4.500 10h3v3h-3z" fill="#00a4ef" /><path d="M8.500 10h3v3h-3z" fill="#ffb900" /></svg> },
  { id: "dropbox", cell: "", icon: <FaDropbox size={16} color="#fff" /> },
  { id: "bolt", cell: "", icon: <svg viewBox="0 0 16 16" className="size-4"><path d="M11.500 0L5.500 4.500Q4 6 5.500 7.500L8.500 10L5 16L11 11Q12.500 9 11 7.500L8.500 5.500Z" fill="#2b8fe8" /><path d="M11.500 0L5.500 4.500Q4 6 5.500 7.500L7.500 9L8.500 5.500Z" fill="#63c4f8" /></svg> },
  { id: "mail", cell: "", icon: <svg viewBox="0 0 16 16" className="size-4"><path d="M0 6L8 0L16 6V15H0Z" fill="#1273c4" /><path d="M1.500 5.500h13V9L8 12L1.500 9z" fill="#fff" /><path d="M0 6L9 11L16 15H0Z" fill="#2ba6f0" /><path d="M16 6L7 12L0 15H16Z" fill="#3cb8fa" /></svg> },
  { id: "camera", cell: "", icon: <svg viewBox="0 0 16 16" className="size-4"><path d="M0 2h16v12H0z" fill="#fff" /><path d="M2 1h3v1H2z" fill="#fff" /><circle cx="8.500" cy="8" r="3.500" fill="#fff" stroke="#111" strokeWidth="1.600" /><circle cx="8.500" cy="8" r="1.500" fill="#111" /><path d="M12.500 3.500h2v2h-2z" fill="#111" /></svg> },
  { id: "line", cell: "bg-[#9c531c]", line: "w-[36px] bg-[#ff7800]", icon: <span className="flex size-4 items-center justify-center overflow-hidden rounded-sm bg-white"><FaLine size={19} color="#00b900" className="shrink-0" /></span> },
  { id: "spotify", cell: "", line: "w-[28px] bg-[#76b9ed]", icon: <FaSpotify size={16} color="#1ed760" /> },
  { id: "instagram", cell: "", icon: <span className="flex size-4 items-center justify-center bg-[#0078d7]"><FaInstagram size={11} color="#cfe6ff" /></span> },
  { id: "sublime", cell: "", icon: <svg viewBox="0 0 16 16" className="size-4"><rect width="16" height="16" rx="1" fill="#4b4b4b" /><path d="M4 5.500L12 3V6L7.500 7.500L12 9V11L4 13.500V10.500L8.500 9L4 7.500Z" fill="#ff9800" /></svg> },
  { id: "sticky", cell: "", icon: <svg viewBox="0 0 16 16" className="size-4"><path d="M2 2h12v6H8v6H2z" fill="#ffe600" /><path d="M9 14h5V9z" fill="#ffe600" /><path d="M8 8h6l-6 6z" fill="#111" /></svg> },
  { id: "whatsapp", cell: "", line: "w-[28px] bg-[#76b9ed]", icon: <span className="flex size-4 items-center justify-center bg-[#0078d7]"><span className="flex size-[11px] items-center justify-center rounded-full bg-[#2ecc52]"><FaWhatsapp size={12} color="#fff" className="shrink-0" /></span></span> },
  { id: "word", cell: "", icon: <OfficeIcon letter="W" color="#2b579a" /> },
  { id: "chrome", cell: "bg-[#333]", line: "w-[36px] bg-[#76b9ed]", icon: <svg viewBox="0 0 16 16" className="size-[15px]"><circle cx="8" cy="8" r="8" fill="#ffcd40" /><path d="M1.100 4A8 8 0 0 1 15 4.200H8L4.500 10Z" fill="#e34133" /><path d="M1.100 4A8 8 0 0 0 7.500 16L11 9.800L5 10.500Z" fill="#1da462" /><circle cx="8" cy="8" r="3.700" fill="#fff" /><circle cx="8" cy="8" r="3" fill="#4285f4" /></svg> },
  { id: "excel", cell: "", line: "w-[28px] bg-[linear-gradient(to_right,#76b9ed_19px,#5a8ab0_19px)]", icon: <OfficeIcon letter="X" color="#217346" /> },
  { id: "powerpoint", cell: "", line: "w-[28px] bg-[#76b9ed]", icon: <OfficeIcon letter="P" color="#d24726" /> },
];

function Taskbar() {
  return (
    <div className="flex h-[32px] shrink-0 bg-[#101010] text-white">
      <div className="flex w-[36px] items-center justify-center"><FaWindows size={17} /></div>
      <div className="flex w-[36px] items-center justify-center">
        <svg viewBox="0 0 18 18" className="h-[18px] w-[18px]" fill="none" stroke="#fff" strokeWidth="1.300"><circle cx="11" cy="6.500" r="5.300" /><path d="M7.300 10.500L1 17" /></svg>
      </div>
      <div className="flex w-[36px] items-center justify-center">
        <svg viewBox="0 0 16 16" className="size-4" fill="none" stroke="#fff" strokeWidth="1.200"><path d="M.6 0v2.500h10V0M.6 5h10v6H.6zM.6 16v-2.500h10V16M14.500 0v3M14.500 8.500V16" /><path d="M13 4.500h3v3h-3z" fill="#fff" stroke="none" /></svg>
      </div>
      <div className="ml-[3px] flex gap-px">
        {APPS.map((a) => (
          <div key={a.id} className={`flex w-[36px] flex-col items-center ${a.cell}`}>
            <div className="flex h-[28px] items-center pt-[2px]">{a.icon}</div>
            {a.line && <span className={`h-[2px] ${a.line}`} />}
          </div>
        ))}
      </div>
      <div className="ml-auto flex items-center">
        <svg viewBox="0 0 24 22" className="h-[22px] w-[24px]" fontFamily="Liberation Sans"><circle cx="10.500" cy="10.500" r="9.700" fill="#0c96d4" stroke="#fff" strokeWidth="1.600" /><text x="10.500" y="16" fontSize="16" fontWeight="700" fill="#fff" textAnchor="middle">?</text><circle cx="18.500" cy="16" r="4.800" fill="#f4a91f" /><path d="M18 13h1.200v1.200H18zM18 15h1.200v4H18z" fill="#fff" /></svg>
        <svg viewBox="0 0 12 8" className="ml-[10px] h-[8px] w-[12px]" fill="none" stroke="#fff" strokeWidth="1.300"><path d="M.5 7L6 1L11.500 7" /></svg>
        <svg viewBox="0 0 17 11" className="ml-[10px] h-[11px] w-[17px]"><path d="M3 10.500A3 3 0 0 1 2.500 5A4 4 0 0 1 9 2.500A3.800 3.800 0 0 1 14 5.500A2.600 2.600 0 0 1 14 10.500Z" fill="#f5f5f5" /><path d="M3 5A4 4 0 0 1 9.500 2.500Q12 3 13 6L8 8Z" fill="#aaa" /></svg>
        <svg viewBox="0 0 15 10" className="ml-[9px] h-[10px] w-[15px]"><path d="M.5.5h12v9H.5z" fill="none" stroke="#fff" /><path d="M13 3h1.500v4H13zM2.500 2.500h4v5h-4z" fill="#fff" /></svg>
        <svg viewBox="0 0 13 13" className="ml-[11px] size-[13px]" fill="none" stroke="#ddd" strokeWidth="1.200"><path d="M1 12A11 11 0 0 1 12.500 1.500M4 12A8 8 0 0 1 12.500 4.500M7 12A5 5 0 0 1 12.500 7.500" /><circle cx="11" cy="11.500" r="1.500" fill="#fff" stroke="none" /></svg>
        <svg viewBox="0 0 17 13" className="ml-[8px] h-[13px] w-[17px]" fill="none" stroke="#fff" strokeWidth="1.100"><path d="M.6 4.500H3L6 1.500V11.500L3 8.500H.6zM8 4.500Q9.500 6.500 8 8.500" /><path d="M10.500 3Q13 6.500 10.500 10M13 1.500Q16.500 6.500 13 11.500" stroke="#777" /></svg>
        <span className="ml-[9px] w-[23px] text-[12px] tracking-[-0.3px]">ENG</span>
        <div className="ml-[10px] w-[64px] text-center text-[12px] leading-[16px] tracking-[-0.5px] whitespace-nowrap"><div>11:56</div><div>28/02/2020</div></div>
        <svg viewBox="0 0 16 16" className="ml-[15px] size-4"><path d="M0 .5h16v12h-5.500L8 15.500L5.500 12.500H0z" fill="#fff" /><path d="M3 3.500h10M3 6.500h10M3 9.500h7" stroke="#111" /></svg>
        <span className="mr-1 ml-[20px] h-[32px] w-px bg-[#555]" />
      </div>
    </div>
  );
}

export default function App() {
  return (
    <div className="flex h-[768px] w-[1366px] flex-col overflow-hidden bg-[#232323] font-['Open_Sans','Noto_Sans',sans-serif]">
      <TabStrip />
      <Toolbar />
      <main className="flex h-[646px] shrink-0"><Page /><Scrollbar /></main>
      <DownloadBar />
      <Taskbar />
    </div>
  );
}
